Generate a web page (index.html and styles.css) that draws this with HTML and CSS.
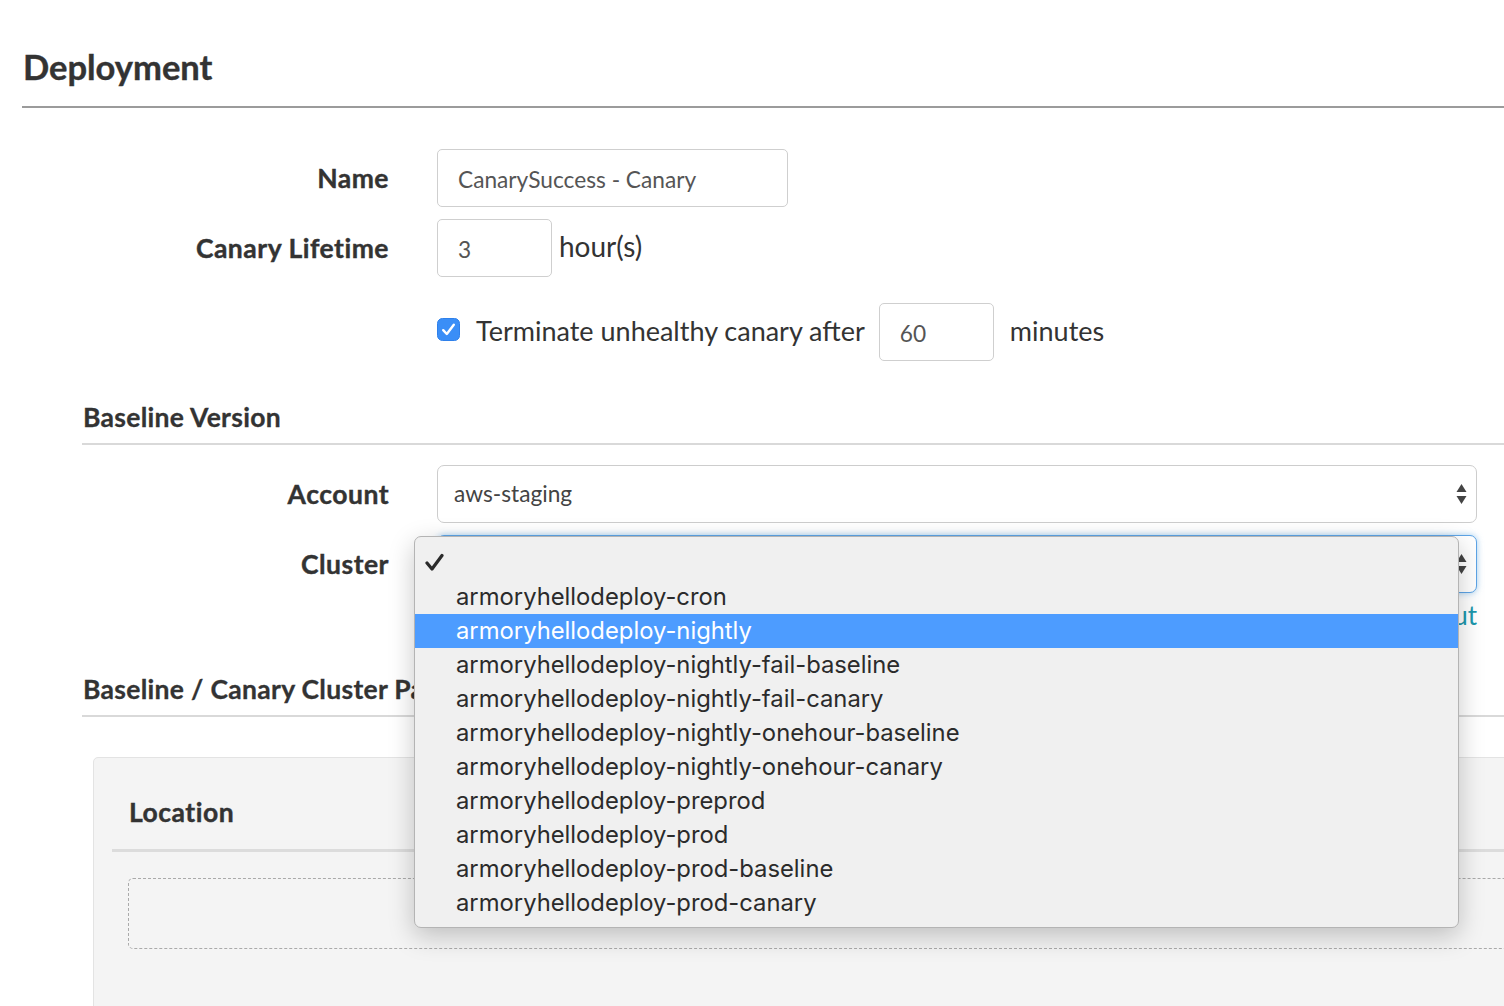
FILE: index.html
```html
<!DOCTYPE html>
<html lang="en">
<head>
<meta charset="utf-8">
<title>Deployment</title>
<link rel="stylesheet" href="styles.css">
</head>
<body>
<div class="page">
  <h1 class="title">Deployment</h1>
  <div class="rule-strong"></div>

  <div class="row first">
    <div class="lbl">Name</div>
    <div class="ctl"><div class="field name-field">CanarySuccess - Canary</div></div>
  </div>
  <div class="row gap12">
    <div class="lbl">Canary Lifetime</div>
    <div class="ctl"><div class="field small-field">3</div><span class="unit hours">hour(s)</span></div>
  </div>
  <div class="row gap26">
    <div class="lbl"></div>
    <div class="ctl">
      <span class="checkbox"><svg width="23" height="23" viewBox="0 0 23 23"><rect x="0.5" y="0.5" width="22" height="22" rx="5" fill="#3a8ef7" stroke="#2f80ea"/><path d="M6.2 12.2 L9.8 16 L16.8 6.8" fill="none" stroke="#fff" stroke-width="2.4" stroke-linecap="round" stroke-linejoin="round"/></svg></span>
      <span class="unit term">Terminate unhealthy canary after</span>
      <div class="field small-field">60</div>
      <span class="unit mins">minutes</span>
    </div>
  </div>

  <div class="sub">
    <h2 class="subtitle sub-first">Baseline Version</h2>
    <div class="rule-light"></div>
  </div>

  <div class="row account-row">
    <div class="lbl">Account</div>
    <div class="ctl"><div class="select"><span class="sel-text">aws-staging</span><svg class="arrows" width="11" height="20" viewBox="0 0 11 20"><path d="M0.5 8 L5.5 0 L10.5 8 Z M0.5 12 L5.5 20 L10.5 12 Z" fill="#444"/></svg></div></div>
  </div>
  <div class="row gap12">
    <div class="lbl">Cluster</div>
    <div class="ctl"><div class="select focused"><span class="sel-text"></span><svg class="arrows" width="11" height="20" viewBox="0 0 11 20"><path d="M0.5 8 L5.5 0 L10.5 8 Z M0.5 12 L5.5 20 L10.5 12 Z" fill="#444"/></svg></div></div>
  </div>
  <div class="link-row"><a class="toggle-link">Toggle for text input</a></div>

  <div class="sub">
    <h2 class="subtitle sub-second">Baseline / Canary Cluster Pairs</h2>
    <div class="rule-light"></div>
  </div>

  <div class="panel">
    <h3 class="panel-title">Location</h3>
    <div class="rule-panel"></div>
    <div class="dashed"></div>
  </div>

  <div class="menu">
    <div class="item checked"><svg class="check" width="19" height="19" viewBox="0 0 19 19"><path d="M2 10 L7 16 L17 2.5" fill="none" stroke="#2b2b2b" stroke-width="3.2" stroke-linecap="round" stroke-linejoin="round"/></svg></div>
    <div class="item">armoryhellodeploy-cron</div>
    <div class="item active">armoryhellodeploy-nightly</div>
    <div class="item">armoryhellodeploy-nightly-fail-baseline</div>
    <div class="item">armoryhellodeploy-nightly-fail-canary</div>
    <div class="item">armoryhellodeploy-nightly-onehour-baseline</div>
    <div class="item">armoryhellodeploy-nightly-onehour-canary</div>
    <div class="item">armoryhellodeploy-preprod</div>
    <div class="item">armoryhellodeploy-prod</div>
    <div class="item">armoryhellodeploy-prod-baseline</div>
    <div class="item">armoryhellodeploy-prod-canary</div>
  </div>
</div>
</body>
</html>
```

FILE: styles.css
```css
html, body {
  margin: 0;
  padding: 0;
  background: #fff;
  overflow: hidden;
  width: 1504px;
  height: 1006px;
}
body {
  font-family: "Lato", "Open Sans", sans-serif;
  color: #333;
}
.page {
  position: relative;
  width: 1600px;
  padding: 47px 0 0 22px;
  box-sizing: border-box;
}
.title {
  margin: 0 0 0 1px;
  font-size: 34.5px;
  line-height: 40px;
  font-weight: 700;
  -webkit-text-stroke: 0.4px #333;
  color: #333;
}
.rule-strong {
  margin-top: 19px;
  height: 2px;
  background: #9b9b9b;
}
.row {
  display: grid;
  grid-template-columns: 367px 1040px;
  column-gap: 48px;
  align-items: center;
  height: 58px;
}
.row.first { margin-top: 41px; }
.row.gap12 { margin-top: 12px; }
.row.gap26 { margin-top: 26px; }
.row.account-row { margin-top: 20px; }
.lbl {
  text-align: right;
  font-weight: 700;
  font-size: 26.5px;
  letter-spacing: 0.5px;
  -webkit-text-stroke: 0.4px #333;
  color: #333;
}
.ctl {
  display: flex;
  align-items: center;
  height: 58px;
}
.field {
  box-sizing: border-box;
  height: 58px;
  border: 1px solid #cfcfcf;
  border-radius: 5px;
  display: flex;
  align-items: center;
  padding: 2px 0 0 20px;
  font-size: 22.7px;
  color: #555;
  background: #fff;
}
.name-field { width: 351px; }
.small-field { width: 115px; padding-left: 20px; }
.unit {
  font-size: 27px;
  color: #333;
}
.hours { margin-left: 7px; margin-top: -4px; font-size: 28px; }
.checkbox {
  display: flex;
  width: 23px;
  height: 23px;
  margin-bottom: 6px;
}
.term { margin-left: 16px; margin-right: 14px; margin-bottom: 4px; }
.mins { margin-left: 16px; margin-bottom: 4px; }
.sub {
  margin-left: 60px;
}
.subtitle {
  margin: 0;
  font-size: 26.5px;
  line-height: 32px;
  font-weight: 700;
  letter-spacing: 0.3px;
  -webkit-text-stroke: 0.3px #333;
  color: #333;
  padding-left: 1px;
}
.sub-first { margin-top: 40px; }
.sub-second { margin-top: 46px; }
.rule-light {
  margin-top: 10px;
  height: 2px;
  background: #d9d9d9;
}
.select {
  box-sizing: border-box;
  width: 1040px;
  height: 58px;
  border: 1px solid #cdcdcd;
  border-radius: 7px;
  background: #fff;
  display: flex;
  align-items: center;
  justify-content: space-between;
  padding: 0 9px 0 16px;
  font-size: 22.7px;
  color: #444;
}
.select.focused {
  border-color: #5ea4e6;
  box-shadow: 0 0 6px rgba(102, 175, 233, 0.6);
}
.sel-text { margin-top: -2px; }
.link-row {
  margin-top: 10px;
  width: 1455px;
  text-align: right;
  line-height: 24px;
  height: 24px;
}
.toggle-link {
  font-size: 26px;
  color: #1d98ad;
}
.panel {
  margin-top: 40px;
  margin-left: 71px;
  height: 300px;
  background: #f4f4f4;
  border: 1px solid #e3e3e3;
  border-radius: 5px;
  padding: 38px 0 0 18px;
  box-sizing: border-box;
}
.panel-title {
  margin: 0 0 0 17px;
  font-size: 26.5px;
  line-height: 32px;
  font-weight: 700;
  letter-spacing: 0.5px;
  -webkit-text-stroke: 0.4px #333;
  color: #333;
}
.rule-panel {
  margin-top: 21px;
  height: 3px;
  background: #dcdcdc;
}
.dashed {
  margin-top: 26px;
  margin-left: 16px;
  height: 71px;
  border: 1px dashed #aaa;
  border-radius: 5px;
  box-sizing: border-box;
}
.menu {
  position: absolute;
  left: 414px;
  top: 536px;
  width: 1045px;
  height: 392px;
  box-sizing: border-box;
  background: #f0f0f0;
  border: 1px solid #b4b4b4;
  border-radius: 7px;
  box-shadow: 0 8px 26px rgba(0, 0, 0, 0.22);
  padding-top: 9px;
  font-family: "Inter", "Roboto", sans-serif;
  font-size: 23.8px;
  color: #2b2b2b;
}
.item {
  height: 34px;
  line-height: 34px;
  padding-left: 41px;
  position: relative;
}
.item.active {
  background: #4d9cff;
  color: #fff;
}
.check {
  position: absolute;
  left: 10px;
  top: 7px;
}
```
